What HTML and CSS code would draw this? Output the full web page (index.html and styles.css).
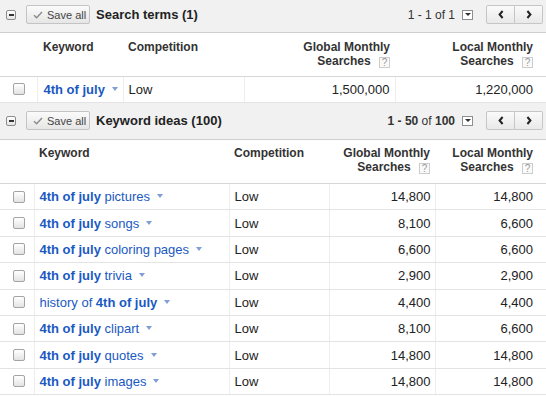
FILE: index.html
```html
<!DOCTYPE html>
<html lang="en">
<head>
  <meta charset="UTF-8">
  <title>Keyword Tool</title>
  <link rel="stylesheet" href="styles.css">
</head>
<body>

  <div class="toolbar toolbar-top">
    <span class="collapse"></span>
    <button class="save-btn"><svg width="10" height="8" viewBox="0 0 10 8"><path d="M1 4.2 L3.6 6.8 L9 1" fill="none" stroke="#8a8a8a" stroke-width="1.4"/></svg>Save all</button>
    <h2 class="title">Search terms (1)</h2>
    <div class="pager">
      <span class="range">1 - 1 of 1</span>
      <span class="menu-box"></span>
      <div class="nav">
        <button class="nav-prev"><svg width="6" height="9" viewBox="0 0 6 9"><path d="M4.6 1 L1.6 4.5 L4.6 8" fill="none" stroke="#222" stroke-width="2"/></svg></button>
        <button class="nav-next"><svg width="6" height="9" viewBox="0 0 6 9"><path d="M1.4 1 L4.4 4.5 L1.4 8" fill="none" stroke="#222" stroke-width="2"/></svg></button>
      </div>
    </div>
  </div>

  <table class="grid grid-terms">
    <colgroup><col class="c1"><col class="c2"><col class="c3"><col class="c4"><col class="c5"></colgroup>
    <tr>
      <th></th><th>Keyword</th><th>Competition</th>
      <th class="num">Global Monthly<br>Searches <span class="help">?</span></th>
      <th class="num last">Local Monthly<br>Searches <span class="help">?</span></th>
    </tr>
    <tr>
      <td class="check"><span class="box"></span></td>
      <td><a class="kw" href="#"><b>4th of july</b></a><span class="drop"></span></td>
      <td>Low</td>
      <td class="num">1,500,000</td>
      <td class="num last">1,220,000</td>
    </tr>
  </table>

  <div class="toolbar">
    <span class="collapse"></span>
    <button class="save-btn"><svg width="10" height="8" viewBox="0 0 10 8"><path d="M1 4.2 L3.6 6.8 L9 1" fill="none" stroke="#8a8a8a" stroke-width="1.4"/></svg>Save all</button>
    <h2 class="title">Keyword ideas (100)</h2>
    <div class="pager">
      <span class="range"><b>1 - 50</b> of <b>100</b></span>
      <span class="menu-box"></span>
      <div class="nav">
        <button class="nav-prev"><svg width="6" height="9" viewBox="0 0 6 9"><path d="M4.6 1 L1.6 4.5 L4.6 8" fill="none" stroke="#222" stroke-width="2"/></svg></button>
        <button class="nav-next"><svg width="6" height="9" viewBox="0 0 6 9"><path d="M1.4 1 L4.4 4.5 L1.4 8" fill="none" stroke="#222" stroke-width="2"/></svg></button>
      </div>
    </div>
  </div>

  <table class="grid grid-ideas">
    <colgroup><col class="c1"><col class="c2"><col class="c3"><col class="c4"><col class="c5"></colgroup>
    <tr>
      <th></th><th>Keyword</th><th>Competition</th>
      <th class="num">Global Monthly<br>Searches <span class="help">?</span></th>
      <th class="num last">Local Monthly<br>Searches <span class="help">?</span></th>
    </tr>
    <tr><td class="check"><span class="box"></span></td><td><a class="kw" href="#"><b>4th of july</b> pictures</a><span class="drop"></span></td><td>Low</td><td class="num">14,800</td><td class="num last">14,800</td></tr>
    <tr><td class="check"><span class="box"></span></td><td><a class="kw" href="#"><b>4th of july</b> songs</a><span class="drop"></span></td><td>Low</td><td class="num">8,100</td><td class="num last">6,600</td></tr>
    <tr><td class="check"><span class="box"></span></td><td><a class="kw" href="#"><b>4th of july</b> coloring pages</a><span class="drop"></span></td><td>Low</td><td class="num">6,600</td><td class="num last">6,600</td></tr>
    <tr><td class="check"><span class="box"></span></td><td><a class="kw" href="#"><b>4th of july</b> trivia</a><span class="drop"></span></td><td>Low</td><td class="num">2,900</td><td class="num last">2,900</td></tr>
    <tr><td class="check"><span class="box"></span></td><td><a class="kw" href="#">history of <b>4th of july</b></a><span class="drop"></span></td><td>Low</td><td class="num">4,400</td><td class="num last">4,400</td></tr>
    <tr><td class="check"><span class="box"></span></td><td><a class="kw" href="#"><b>4th of july</b> clipart</a><span class="drop"></span></td><td>Low</td><td class="num">8,100</td><td class="num last">6,600</td></tr>
    <tr><td class="check"><span class="box"></span></td><td><a class="kw" href="#"><b>4th of july</b> quotes</a><span class="drop"></span></td><td>Low</td><td class="num">14,800</td><td class="num last">14,800</td></tr>
    <tr><td class="check"><span class="box"></span></td><td><a class="kw" href="#"><b>4th of july</b> images</a><span class="drop"></span></td><td>Low</td><td class="num">14,800</td><td class="num last">14,800</td></tr>
  </table>

</body>
</html>
```

FILE: styles.css
```css
* { box-sizing: border-box; }
body { margin: 0; width: 546px; overflow: hidden; font-family: "Liberation Sans", Arial, sans-serif; color: #222; background: #fff; }

/* toolbar above each table */
.toolbar { display: flex; align-items: center; height: 37px; padding: 0 3px 0 6px; background: #f1f1f1; border-bottom: 1px solid #cfcfcf; }
.toolbar-top { height: 33px; padding-bottom: 3px; }
.collapse { display: flex; align-items: center; justify-content: center; width: 10px; height: 10px; border: 1px solid #8c8c8c; border-radius: 2px; background: linear-gradient(#fff, #e4e4e4); }
.collapse::after { content: ""; width: 5px; height: 2px; background: #333; }
.save-btn { display: flex; align-items: center; gap: 4px; width: 64px; height: 19px; margin-left: 10px; padding: 0 0 0 6px; font: 11px "Liberation Sans", Arial, sans-serif; color: #444; background: linear-gradient(#fbfbfb, #e6e6e6); border: 1px solid #c4c4c4; border-radius: 2px; }
.title { margin: 0 0 0 6px; font-size: 13px; font-weight: bold; color: #222; }
.pager { display: flex; align-items: center; margin-left: auto; }
.range { font-size: 12px; color: #333; }
.menu-box { display: flex; align-items: center; justify-content: center; width: 11px; height: 10px; margin-left: 7px; border: 1px solid #8e8e8e; background: #fff; }
.menu-box::after { content: ""; border-left: 3px solid transparent; border-right: 3px solid transparent; border-top: 3px solid #333; }
.nav { display: flex; margin-left: 13px; }
.nav button { display: flex; align-items: center; justify-content: center; width: 29px; height: 19px; padding: 0; background: linear-gradient(#fafafa, #e9e9e9); border: 1px solid #c6c6c6; }
.nav-prev { border-radius: 2px 0 0 2px; }
.nav-next { border-left: 0 !important; width: 28px !important; border-radius: 0 2px 2px 0; }

/* tables */
.grid { width: 546px; border-collapse: collapse; table-layout: fixed; }
.grid th { padding: 7px 5px 7px 5px; font-size: 12px; font-weight: bold; line-height: 14px; color: #333; text-align: left; vertical-align: top; border-bottom: 1px solid #d6d6d6; }
.grid td { height: 26px; padding: 0 5px; font-size: 13px; color: #222; border-left: 1px solid #ededed; border-bottom: 1px solid #e3e3e3; white-space: nowrap; }
.grid .num { text-align: right; }
.grid .last { padding-right: 13px; }
.grid td.check { padding: 0 0 0 13px; border-left: 0; }
.grid-terms th { height: 43px; }
.grid-terms th:nth-child(2) { padding-left: 6px; }
.grid-terms td:nth-child(2) { padding-left: 6px; }
.grid-ideas th { height: 44px; padding-top: 6px; }
.grid-ideas tr + tr td { height: 26.4px; }
.grid-ideas td.num:not(.last) { padding-right: 4px; }

.grid-terms .c1 { width: 37px; }
.grid-terms .c2 { width: 86px; }
.grid-terms .c3 { width: 121px; }
.grid-terms .c4 { width: 151px; }
.grid-terms .c5 { width: 151px; }
.grid-ideas .c1 { width: 34px; }
.grid-ideas .c2 { width: 195px; }
.grid-ideas .c3 { width: 100px; }
.grid-ideas .c4 { width: 106px; }
.grid-ideas .c5 { width: 111px; }

.help { display: inline-block; width: 11px; height: 11px; margin-left: 5px; vertical-align: -1px; font-size: 10px; font-weight: normal; line-height: 9px; text-align: center; color: #999; background: #fafafa; border: 1px solid #ccc; }
.box { display: block; width: 12px; height: 12px; border: 1px solid #a4a4a4; border-radius: 2px; background: linear-gradient(#fff, #e3e3e3); }
.kw { color: #1a59c2; text-decoration: none; }
.drop { display: inline-block; margin-left: 7px; vertical-align: 3px; border-left: 3.5px solid transparent; border-right: 3.5px solid transparent; border-top: 4px solid #7f9dd6; }
```
